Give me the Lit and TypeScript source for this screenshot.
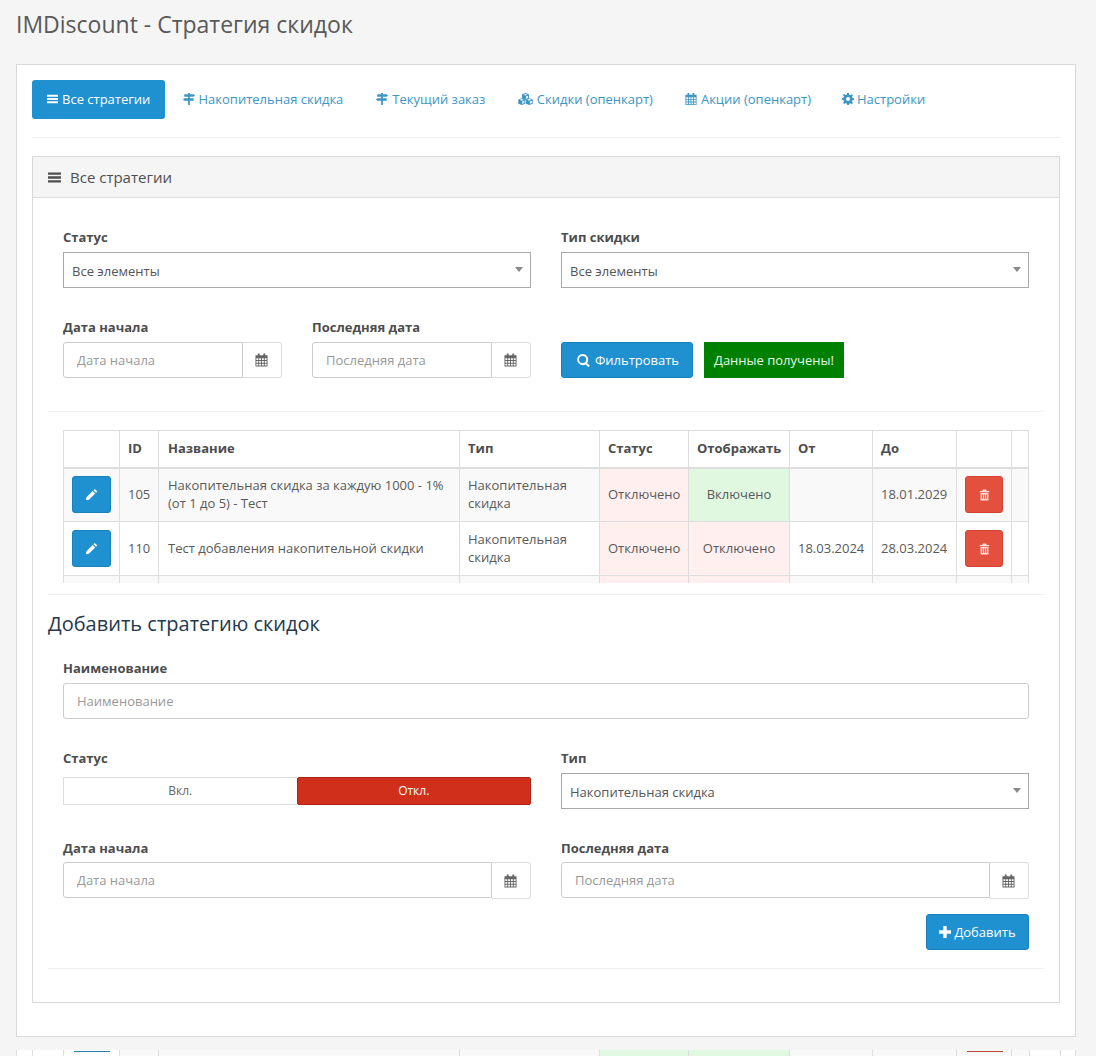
import { LitElement, html, css } from "lit";
import { customElement } from "lit/decorators.js";

const ic = (vb: string, d: string, cls = "ic") =>
  html`<svg class=${cls} viewBox=${vb} fill="currentColor" fill-rule="evenodd"><path d=${d}></path></svg>`;

const cube = (x: number, y: number) =>
  `M${x} ${y - 4}L${x + 4} ${y - 2.4}V${y + 2.4}L${x} ${y + 4}L${x - 4} ${y + 2.4}V${y - 2.4}Z` +
  `M${x} ${y - 2.9}L${x - 2.4} ${y - 2}L${x} ${y - 1.1}L${x + 2.4} ${y - 2}Z` +
  `M${x + 0.6} ${y}V${y + 2.6}L${x + 3} ${y + 1.7}V${y - 0.9}Z`;

const BARS = "M0 1.5h14v2.6H0zM0 5.7h14v2.6H0zM0 9.9h14v2.6H0z";
const SIGNS = "M6 0h2v1.5h4.5L14 3l-1.5 1.5H8V6h4.5v3H8v5H6V9H1.5L0 7.5 1.5 6H6V4.5H1.5v-3H6z";
const CUBES = cube(8.5, 4) + cube(4.1, 10) + cube(12.9, 10);
const CAL = "M3 0h2v2h4V0h2v2h2.5v12H.5V2H3zM1.5 5v2h2V5zm3 0v2h2V5zm3 0v2h2V5zm3 0v2h2V5zm-9 3v2h2V8zm3 0v2h2V8zm3 0v2h2V8zm3 0v2h2V8zm-9 3v2h2v-2zm3 0v2h2v-2zm3 0v2h2v-2zm3 0v2h2v-2z";
const GEAR = "M6 0h2l.4 2 1.3.5L11.4 1.4 12.8 2.8l-1.1 1.7.5 1.3 1.8.4v2l-1.8.4-.5 1.3 1.1 1.7-1.4 1.4-1.7-1.1-1.3.5L8 14H6l-.4-1.8-1.3-.5-1.7 1.1-1.4-1.4 1.1-1.7-.5-1.3L0 8V6l1.8-.4.5-1.3-1.1-1.7 1.4-1.4 1.7 1.1 1.3-.5zM7 4.7a2.3 2.3 0 100 4.6 2.3 2.3 0 000-4.6z";
const SEARCH = "M6 0a6 6 0 014.8 9.6l3 3-1.6 1.6-3-3A6 6 0 116 0zm0 2.2a3.8 3.8 0 100 7.6 3.8 3.8 0 000-7.6z";
const PLUS = "M5 0h4v5h5v4H9v5H5V9H0V5h5z";
const PENCIL = "M10.5 1l2.8 2.8-1.4 1.4-2.8-2.8zM8.2 3.1L11 5.9 4.2 12.7 1 13.3l.6-3.4z";
const TRASH = "M5 0h4l1 2h3v1.5H1V2h3zM2 4.5h10V14H2zm2 1.5v6h1V6zm2.5 0v6h1V6zM9 6v6h1V6z";

const TABS: [string, string, string, string][] = [
  ["Все стратегии", "0 0 14 14", BARS, "on"],
  ["Накопительная скидка", "0 0 14 14", SIGNS, ""],
  ["Текущий заказ", "0 0 14 14", SIGNS, ""],
  ["Скидки (опенкарт)", "0 0 17 14", CUBES, "tight wide"],
  ["Акции (опенкарт)", "0 0 14 14", CAL, "tight"],
  ["Настройки", "0 0 14 14", GEAR, "tight gear"],
];

const ROWS = [
  { edit: true, id: "105", name: "Накопительная скидка за каждую 1000 - 1% (от 1 до 5) - Тест", type: "Накопительная скидка", st: "Отключено", show: "Включено", showOn: true, from: "", to: "18.01.2029", zebra: true },
  { edit: true, id: "110", name: "Тест добавления накопительной скидки", type: "Накопительная скидка", st: "Отключено", show: "Отключено", showOn: false, from: "18.03.2024", to: "28.03.2024", zebra: false },
  { edit: false, id: "", name: "", type: "", st: "", show: "", showOn: false, from: "", to: "", zebra: true },
];

const COLS = [56, 39, 301, 140, 89, 101, 83, 84, 55, 17];

@customElement("app-root")
export class AppRoot extends LitElement {
  static styles = css`
    :host { display: block; height: 1056px; overflow: hidden; background: #f5f5f5; font: 13px/18px "Open Sans", sans-serif; color: #595959; }
    * { box-sizing: border-box; }
    .ic { width: 12px; height: 12px; flex: none; }
    h1 { margin: 0; padding: 8px 16px 0; height: 64px; font-size: 23px; line-height: 32px; font-weight: 400; color: #595959; }
    .card { margin: 0 20px 0 16px; height: 973px; background: #fff; border: 1px solid #d9d9d9; padding: 15px 15px 0; }
    .tabs { display: flex; height: 58px; border-bottom: 1px solid #eee; }
    .tab { height: 39px; margin-left: 2px; display: flex; align-items: center; gap: 4px; padding: 0 15.5px 2px; color: #3d95c4; border-radius: 3px; white-space: nowrap; }
    .tab.tight { padding: 0 15px 2px; }
    .tab.wide { gap: 3px; margin-left: 1px; }
    .tab.wide .ic { width: 17px; }
    .tab.gear { gap: 3px; margin-left: 1px; }
    .tab.on { margin-left: 0; width: 133px; background: #1f90d0; color: #fff; padding: 0 0 2px 15px; }
    .tab.on .ic { width: 11px; }
    .panel { margin-top: 18px; height: 847px; border: 1px solid #d9d9d9; }
    .ph { height: 41px; background: #f5f5f5; border-bottom: 1px solid #ddd; display: flex; align-items: center; gap: 9px; padding: 0 15px; font-size: 15px; color: #4f4f4f; }
    .ph .ic { width: 13px; height: 13px; }
    .pb { padding: 0 15px; }
    .row2 { display: grid; grid-template-columns: 1fr 1fr; gap: 30px; padding: 30px 30px 0; }
    .row2.name { display: block; padding-top: 20px; }
    .pair { display: grid; grid-template-columns: 1fr 1fr; gap: 30px; }
    label { display: block; height: 18px; font-weight: 700; color: #4d4d4d; line-height: 18px; }
    .sel { height: 36px; margin-top: 6px; border: 1px solid #a9a9a9; display: flex; align-items: center; justify-content: space-between; padding: 2px 7px 0 8px; color: #555; }
    .sel i { display: block; width: 0; height: 0; border: 4px solid transparent; border-top: 5px solid #888; border-bottom: 0; margin: -4px 0 0; }
    .date { display: flex; height: 36px; margin-top: 6px; border-radius: 3px; }
    .date .in { flex: 1; min-width: 0; border: 1px solid #ccc; border-radius: 3px 0 0 3px; display: flex; align-items: center; padding: 0 13px; color: #999; }
    .name .in { border-radius: 3px; }
    .date .ad { width: 39px; padding-right: 2px; border: 1px solid #ddd; border-left: 0; border-radius: 0 3px 3px 0; display: flex; align-items: center; justify-content: center; color: #666; }
    .date .ad .ic { width: 13px; height: 14px; }
    .date.tall { margin-top: 5px; }
    .date.tall .ad { height: 37px; }
    .btn { height: 36px; border-radius: 3px; background: #1f90d0; border: 1px solid #1a80ba; color: #fff; display: flex; align-items: center; }
    .filter { display: flex; gap: 11px; align-items: flex-start; padding-top: 24px; }
    .filter .btn { width: 132px; justify-content: center; gap: 5px; padding-left: 2px; }
    .filter .btn .ic { width: 13px; height: 13px; }
    .ok { background: #008000; color: #e4f7e4; height: 36px; padding: 0 10px; display: flex; align-items: center; white-space: nowrap; }
    hr { border: 0; border-top: 1px solid #eee; margin: 0; }
    .hr1 { padding-top: 33px; }
    .hr2 { padding-top: 11px; }
    .hr3 { padding-top: 18px; }
    .h2w { padding-top: 14px; }
    .wrap { height: 153px; margin: 18px 30px 0; overflow: hidden; }
    table { border-collapse: collapse; table-layout: fixed; width: 965px; }
    th, td { border: 1px solid #ddd; padding: 0 8px 2px; text-align: left; vertical-align: middle; font-weight: 400; }
    th { height: 37px; font-weight: 700; color: #4d4d4d; border-bottom: 2px solid #ddd; white-space: nowrap; }
    td { height: 54px; color: #595959; }
    th:nth-child(3), td:nth-child(3) { padding-left: 9px; }
    td:nth-child(1), td:nth-child(9) { padding-bottom: 0; }
    tr.z td { background: #f9f9f9; }
    tr td.red { background: #ffefef; }
    tr td.green { background: #e0f8e0; text-align: center; }
    td.center { text-align: center; }
    td.nb { white-space: nowrap; }
    .sq { width: 39px; height: 37px; border-radius: 3px; display: flex; align-items: center; justify-content: center; color: #fff; background: #1f90d0; border: 1px solid #1a80ba; }
    .sq .ic { width: 13px; height: 13px; }
    .sq.del { width: 38px; background: #e4503e; border-color: #d44333; color: #ffe0dc; }
    .sq.del .ic { width: 11px; height: 12px; }
    h2 { margin: 0; height: 30px; font-size: 20px; line-height: 30px; font-weight: 400; color: #24394d; }
    .toggle { display: flex; height: 28px; margin-top: 10px; }
    .toggle div { flex: 1; display: flex; align-items: center; justify-content: center; font-size: 12px; }
    .toggle .off { border: 1px solid #ddd; border-right: 0; color: #666; }
    .toggle .act { background: #cf2f1b; color: #fff; border: 1px solid #a92616; border-radius: 2px; }
    .add { display: flex; justify-content: flex-end; padding: 16px 30px 0; }
    .add .btn { width: 103px; justify-content: center; gap: 3px; }
    .strip { display: grid; grid-template-columns: 16px 31px 56px 39px 301px 140px 89px 101px 83px 84px 55px 18px 31px 16px; height: 6px; margin: 13px 0 0 16px; width: 1060px; }
    .strip div { border-left: 1px solid #ddd; background: #f8f8f8; }
    .strip .w { background: #fff; }
    .strip .gr { background: #e0f8e0; }
    .strip .w.last { border-right: 1px solid #ddd; }
    .strip .ed { padding: 1px 0 0 10px; }
    .strip .ed b { display: block; width: 36px; height: 1px; background: #2b7fa8; }
    .strip .dl { padding: 1px 0 0 10px; }
    .strip .dl b { display: block; width: 36px; height: 1px; background: #b84a35; }
  `;

  private date(text: string, tall = false) {
    return html`<div class="date ${tall ? "tall" : ""}"><div class="in">${text}</div><div class="ad">${ic("0 0 14 14", CAL)}</div></div>`;
  }

  render() {
    return html`
      <h1>IMDiscount - Стратегия скидок</h1>
      <div class="card">
        <div class="tabs">
          ${TABS.map(([t, vb, d, c]) => html`<div class="tab ${c}">${ic(vb, d)}${t}</div>`)}
        </div>
        <div class="panel">
          <div class="ph">${ic("0 0 14 14", BARS)}Все стратегии</div>
          <div class="row2">
            <div><label>Статус</label><div class="sel">Все элементы<i></i></div></div>
            <div><label>Тип скидки</label><div class="sel">Все элементы<i></i></div></div>
          </div>
          <div class="row2">
            <div class="pair">
              <div><label>Дата начала</label>${this.date("Дата начала")}</div>
              <div><label>Последняя дата</label>${this.date("Последняя дата")}</div>
            </div>
            <div class="filter">
              <div class="btn">${ic("0 0 14 14", SEARCH)}Фильтровать</div>
              <div class="ok">Данные получены!</div>
            </div>
          </div>
          <div class="pb hr1"><hr /></div>
          <div class="wrap">
            <table>
              <colgroup>${COLS.map((w) => html`<col style="width:${w}px" />`)}</colgroup>
              <thead><tr><th></th><th>ID</th><th>Название</th><th>Тип</th><th>Статус</th><th>Отображать</th><th>От</th><th>До</th><th></th><th></th></tr></thead>
              <tbody>
                ${ROWS.map((r) => html`<tr class=${r.zebra ? "z" : ""}>
                  <td>${r.edit ? html`<div class="sq">${ic("0 0 14 14", PENCIL)}</div>` : ""}</td>
                  <td>${r.id}</td><td>${r.name}</td><td>${r.type}</td>
                  <td class="red nb">${r.st}</td>
                  <td class="${r.showOn ? "green" : "red center"} nb">${r.show}</td>
                  <td class="nb">${r.from}</td><td class="nb">${r.to}</td>
                  <td>${r.edit ? html`<div class="sq del">${ic("0 0 14 14", TRASH)}</div>` : ""}</td><td></td>
                </tr>`)}
              </tbody>
            </table>
          </div>
          <div class="pb hr2"><hr /></div>
          <div class="pb h2w"><h2>Добавить стратегию скидок</h2></div>
          <div class="row2 name">
            <label>Наименование</label>
            <div class="date"><div class="in">Наименование</div></div>
          </div>
          <div class="row2">
            <div><label>Статус</label><div class="toggle"><div class="off">Вкл.</div><div class="act">Откл.</div></div></div>
            <div><label>Тип</label><div class="sel">Накопительная скидка<i></i></div></div>
          </div>
          <div class="row2">
            <div><label>Дата начала</label>${this.date("Дата начала", true)}</div>
            <div><label>Последняя дата</label>${this.date("Последняя дата", true)}</div>
          </div>
          <div class="add"><div class="btn">${ic("0 0 14 14", PLUS)}Добавить</div></div>
          <div class="pb hr3"><hr /></div>
        </div>
      </div>
      <div class="strip">
        <div class="w"></div><div class="w"></div>
        <div class="w ed"><b></b></div><div></div><div></div><div></div>
        <div class="gr"></div><div class="gr"></div>
        <div></div><div></div>
        <div class="dl"><b></b></div><div></div>
        <div class="w"></div><div class="w last"></div>
      </div>
    `;
  }
}
